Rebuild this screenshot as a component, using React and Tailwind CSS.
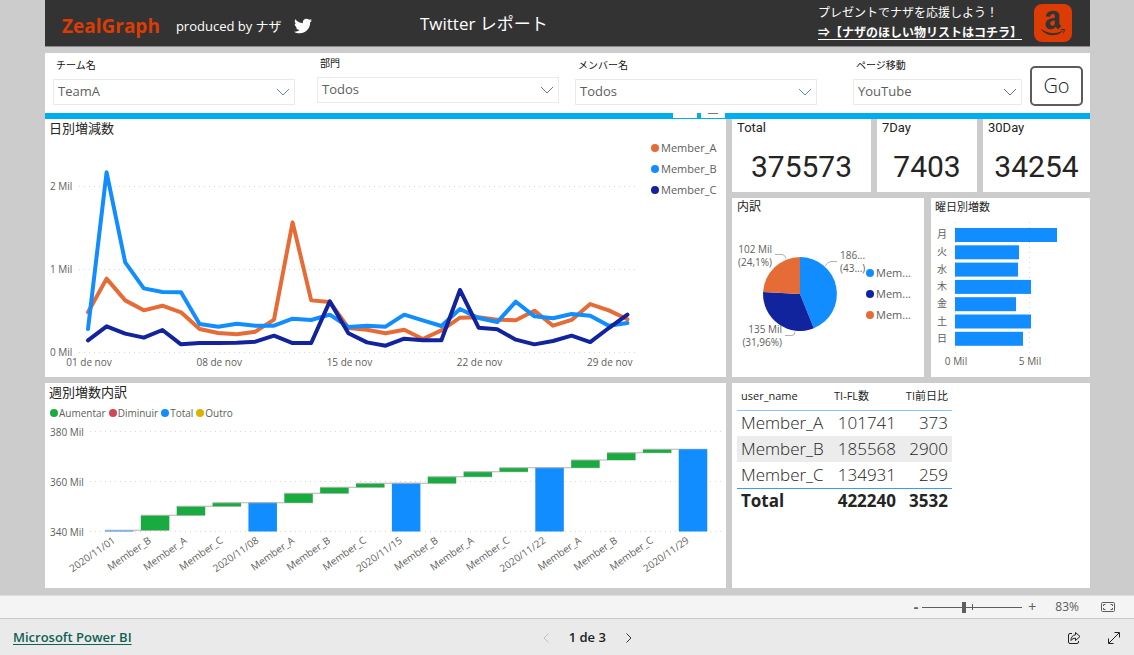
import React from 'react';
import { FaAmazon, FaTwitter } from 'react-icons/fa';

const COLORS = { A: '#e66c37', B: '#118dff', C: '#12239e', up: '#1aab40', grid: '#d6d6d6' };

// Daily growth in thousands, 01 - 30 nov
const DAILY = [
  { key: 'A', values: [478, 884, 622, 502, 558, 478, 277, 229, 213, 245, 390, 1562, 622, 602, 289, 269, 225, 269, 157, 261, 414, 418, 390, 382, 498, 317, 386, 578, 502, 394] },
  { key: 'B', values: [277, 2165, 1080, 767, 723, 719, 337, 305, 341, 317, 317, 402, 386, 450, 301, 317, 305, 450, 382, 313, 518, 410, 361, 606, 430, 406, 458, 438, 317, 349] },
  { key: 'C', values: [141, 309, 221, 173, 265, 92, 108, 108, 112, 124, 197, 108, 108, 610, 225, 116, 76, 161, 141, 141, 747, 293, 273, 149, 92, 133, 197, 120, 289, 450] },
];

// Running total per step; a date label marks a total bar
const WEEKLY = [
  ['2020/11/01', 340.5],
  ['Member_B', 346.5],
  ['Member_A', 350.1],
  ['Member_C', 351.5],
  ['2020/11/08', 351.5],
  ['Member_A', 355.3],
  ['Member_B', 357.7],
  ['Member_C', 359.3],
  ['2020/11/15', 359.3],
  ['Member_B', 361.9],
  ['Member_A', 363.9],
  ['Member_C', 365.5],
  ['2020/11/22', 365.5],
  ['Member_A', 368.6],
  ['Member_B', 371.5],
  ['Member_C', 372.9],
  ['2020/11/29', 372.9],
];

const WEEKDAYS = [
  ['月', 102],
  ['火', 64],
  ['水', 63],
  ['木', 76],
  ['金', 61],
  ['土', 76],
  ['日', 68],
];

const MEMBERS = [
  ['Member_A', 101741, 373],
  ['Member_B', 185568, 2900],
  ['Member_C', 134931, 259],
];

const Header = () => (
  <header className="grid h-[47px] grid-cols-[374fr_397fr_auto] items-center border-b border-[#8a8a8a] bg-[#333333] text-white">
    <div className="flex items-center pt-1.5 pl-[17px]">
      <span className="text-[19px] leading-6 font-bold text-[#dc3b04]">ZealGraph</span>
      <span className="ml-4 text-[13px] leading-5">produced by ナザ</span>
      <a href="#twitter" aria-label="Twitter" className="ml-3">
        <FaTwitter className="size-[18px]" />
      </a>
    </div>
    <h1 className="pt-0.5 text-[17px] leading-6">Twitter レポート</h1>
    <div className="flex items-center pr-[18px]">
      <div className="text-xs leading-5">
        <p>プレゼントでナザを応援しよう！</p>
        <a href="#wishlist" className="block font-bold underline underline-offset-2">
          ⇒【ナザのほしい物リストはコチラ】
        </a>
      </div>
      <a href="#amazon" aria-label="Amazon" className="ml-3 flex size-[38px] items-center justify-center rounded-lg bg-[#dc3b04]">
        <FaAmazon className="size-7 text-[#333333]" />
      </a>
    </div>
  </header>
);

const Chevron = ({ className }) => (
  <svg viewBox="0 0 14 8" className={className} fill="none" stroke="currentColor" aria-hidden="true">
    <path d="M1 1l6 6 6-6" />
  </svg>
);

const Filter = ({ id, label, value, className, chevron = 'text-[#5b8fa8]' }) => (
  <div className={className}>
    <label htmlFor={id} className="block pl-[3px] text-[10px] leading-4 text-[#111111]">
      {label}
    </label>
    <div className="relative mt-1.5">
      <select id={id} className="block h-[26px] w-full appearance-none border border-[#eaeaea] bg-white px-1 text-[13px] text-[#605e5c]">
        <option>{value}</option>
      </select>
      <Chevron className={`pointer-events-none absolute top-[9px] right-[5px] h-2 w-3.5 ${chevron}`} />
    </div>
  </div>
);

const Filters = () => (
  <div className="mt-1.5 flex h-[60px] items-start bg-white pt-1 pr-[7px] pl-2">
    <Filter id="team" label="チーム名" value="TeamA" className="mr-[22px] flex-[242]" />
    <Filter id="section" label="部門" value="Todos" className="-mt-0.5 mr-4 flex-[242]" chevron="text-[#7a7462]" />
    <Filter id="member" label="メンバー名" value="Todos" className="mr-9 flex-[242]" />
    <Filter id="page" label="ページ移動" value="YouTube" className="mr-2 flex-[169]" chevron="text-[#7a7462]" />
    <button type="button" className="mt-[9px] h-10 w-[53px] rounded-[5px] border-2 border-[#5c5c5c] text-xl font-light text-[#222222]">
      Go
    </button>
  </div>
);

// Accent strip with the two clipped visual-header buttons
const AccentBar = () => (
  <div className="grid h-1.5 grid-cols-[687fr_358fr] bg-[#00aeef]">
    <div className="flex justify-end gap-1 pr-[7px]">
      <div className="h-[5px] w-6 bg-white" />
      <div className="flex h-[5px] w-6 justify-center bg-white">
        <div className="h-px w-2.5 bg-[#777777]" />
      </div>
    </div>
  </div>
);

const Dot = ({ className }) => <span className={`inline-block size-2 rounded-full ${className}`} />;

const DailyChart = () => {
  const x = (i) => 43 + i * 18.6;
  const y = (v) => 215 - v * 0.083;
  return (
    <section className="bg-white">
      <h2 className="h-[18px] pl-1 text-[13px] leading-[18px]">日別増減数</h2>
      <div className="grid grid-cols-[606fr_75fr]">
        <svg viewBox="0 0 606 240" className="w-full" role="img" aria-label="日別増減数">
          <g stroke={COLORS.grid} strokeDasharray="1 4">
            {[0, 1000, 2000].map((v) => (
              <line key={v} x1="34" x2="594" y1={y(v) + 0.5} y2={y(v) + 0.5} />
            ))}
          </g>
          <g className="fill-[#605e5c] text-[10px]">
            {[0, 1, 2].map((v) => (
              <text key={v} x="5" y={y(v * 1000) + 4}>{v} Mil</text>
            ))}
            {['01', '08', '15', '22', '29'].map((d, i) => (
              <text key={d} x={x(i * 7) + 1} y="229" textAnchor="middle">{d} de nov</text>
            ))}
          </g>
          {DAILY.map(({ key, values }) => (
            <polyline
              key={key}
              points={values.map((v, i) => `${x(i)},${y(v)}`).join(' ')}
              fill="none"
              stroke={COLORS[key]}
              strokeWidth="4"
              strokeLinecap="round"
              strokeLinejoin="round"
            />
          ))}
        </svg>
        <ul className="text-[11px] leading-[21px] text-[#605e5c]">
          <li className="flex items-center gap-0.5"><Dot className="bg-[#e66c37]" />Member_A</li>
          <li className="flex items-center gap-0.5"><Dot className="bg-[#118dff]" />Member_B</li>
          <li className="flex items-center gap-0.5"><Dot className="bg-[#12239e]" />Member_C</li>
        </ul>
      </div>
    </section>
  );
};

const Kpi = ({ title, value }) => (
  <section className="h-[73px] bg-white font-['Roboto','Liberation_Sans',sans-serif] text-[#252423]">
    <h2 className="pl-[5px] text-[13px] leading-[18px]">{title}</h2>
    <p className="text-center text-[30px] leading-[60px]">{value}</p>
  </section>
);

const PieChart = () => (
  <section className="bg-white">
    <h2 className="h-[18px] pl-[5px] text-xs leading-[18px]">内訳</h2>
    <div className="grid grid-cols-[134fr_58fr]">
      <svg viewBox="0 0 134 161" className="w-full" role="img" aria-label="内訳">
        <path d="M68 78V41A37 37 0 0 1 81.8 112.3Z" fill={COLORS.B} />
        <path d="M68 78L81.8 112.3A37 37 0 0 1 31.1 76Z" fill={COLORS.C} />
        <path d="M68 78L31.1 76A37 37 0 0 1 68 41Z" fill={COLORS.A} />
        <g fill="none" stroke="#b3b3b3">
          <path d="M93 50q3 -4.500 6 -4.500h6" />
          <path d="M43 38.500h7q3 0 4 4" />
          <path d="M53 119.500h7q3 0 3-4" />
        </g>
        <g className="fill-[#605e5c] text-[10px]">
          <text x="108" y="43">186...</text>
          <text x="108" y="56">(43...)</text>
          <text x="40" y="37" textAnchor="end">102 Mil</text>
          <text x="40" y="50" textAnchor="end">(24,1%)</text>
          <text x="50" y="117" textAnchor="end">135 Mil</text>
          <text x="50" y="130" textAnchor="end">(31,96%)</text>
        </g>
      </svg>
      <ul className="pt-[46px] text-[11px] leading-[21px] text-[#605e5c]">
        <li className="flex items-center gap-0.5"><Dot className="bg-[#118dff]" />Mem...</li>
        <li className="flex items-center gap-0.5"><Dot className="bg-[#12239e]" />Mem...</li>
        <li className="flex items-center gap-0.5"><Dot className="bg-[#e66c37]" />Mem...</li>
      </ul>
    </div>
  </section>
);

const WeekdayChart = () => (
  <section className="bg-white">
    <h2 className="h-[18px] pl-1 text-[11px] leading-[18px]">曜日別増数</h2>
    <svg viewBox="0 0 159 161" className="w-full" role="img" aria-label="曜日別増数">
      <g stroke={COLORS.grid} strokeDasharray="1 4">
        <line x1="24.5" x2="24.5" y1="6" y2="138" />
        <line x1="98.5" x2="98.5" y1="6" y2="138" />
      </g>
      {WEEKDAYS.map(([day, width], i) => (
        <g key={day}>
          <text x="6" y={22 + i * 17.3} className="fill-[#605e5c] text-[10px]">{day}</text>
          <rect x="24" y={12 + i * 17.3} width={width} height="14" fill={COLORS.B} />
        </g>
      ))}
      <g className="fill-[#605e5c] text-[10px]" textAnchor="middle">
        <text x="25" y="149">0 Mil</text>
        <text x="99" y="149">5 Mil</text>
      </g>
    </svg>
  </section>
);

const WeeklyChart = () => {
  const x = (i) => 60 + i * 35.86;
  const y = (v) => 108.5 - (v - 340) * 2.5;
  return (
    <section className="bg-white">
      <h2 className="h-5 pl-1 text-[13px] leading-[18px]">週別増数内訳</h2>
      <ul className="flex h-5 items-center gap-[3px] pl-[5px] text-[10px] text-[#605e5c]">
        <li className="flex items-center gap-px"><Dot className="bg-[#1aab40]" />Aumentar</li>
        <li className="flex items-center gap-px"><Dot className="bg-[#d64554]" />Diminuir</li>
        <li className="flex items-center gap-px"><Dot className="bg-[#118dff]" />Total</li>
        <li className="flex items-center gap-px"><Dot className="bg-[#d9b300]" />Outro</li>
      </ul>
      <svg viewBox="0 0 681 165" className="w-full" role="img" aria-label="週別増数内訳">
        <g stroke={COLORS.grid} strokeDasharray="1 4">
          {[340, 360, 380].map((v) => (
            <line key={v} x1="45" x2="677" y1={y(v)} y2={y(v)} />
          ))}
        </g>
        <g className="fill-[#605e5c] text-[10px]">
          {[340, 360, 380].map((v) => (
            <text key={v} x="5" y={y(v) + 4}>{v} Mil</text>
          ))}
        </g>
        {WEEKLY.map(([label, value], i) => {
          const isTotal = label.startsWith('2020');
          const base = isTotal ? 340 : WEEKLY[i - 1][1];
          return (
            <g key={i}>
              <rect x={x(i)} y={y(value)} width="28.5" height={y(base) - y(value)} fill={isTotal ? COLORS.B : COLORS.up} />
              {i < WEEKLY.length - 1 && (
                <line x1={x(i)} x2={x(i + 1) + 28.5} y1={y(value)} y2={y(value)} stroke="#b3b3b3" />
              )}
              <text
                transform={`translate(${x(i) + 11} 119) rotate(-35)`}
                textAnchor="end"
                className="fill-[#605e5c] text-[10px]"
              >
                {label}
              </text>
            </g>
          );
        })}
      </svg>
    </section>
  );
};

const MembersTable = () => (
  <section className="bg-white pl-[5px]">
    <table className="w-[215px] table-fixed text-right text-[17px] text-[#252423]">
      <thead>
        <tr className="h-[27px] border-b border-[#8cc6ff] text-[11px]">
          <th className="w-[93px] pl-1 text-left font-normal">user_name</th>
          <th className="w-[70px] pl-1 text-left font-normal">TI-FL数</th>
          <th className="pr-1 font-normal whitespace-nowrap">TI前日比</th>
        </tr>
      </thead>
      <tbody className="font-light">
        {MEMBERS.map(([name, total, diff]) => (
          <tr key={name} className="h-[26px] leading-5 even:bg-[#ececec]">
            <td className="pl-1 text-left">{name}</td>
            <td className="pr-1">{total}</td>
            <td className="pr-1">{diff}</td>
          </tr>
        ))}
      </tbody>
      <tfoot>
        <tr className="h-[26px] border-t border-[#3a9cf5] leading-5 font-bold">
          <td className="pl-1 text-left">Total</td>
          <td className="pr-1">422240</td>
          <td className="pr-1">3532</td>
        </tr>
      </tfoot>
    </table>
  </section>
);

const ZoomBar = () => (
  <div className="flex h-6 items-center justify-end border-t border-b border-t-[#dddddd] border-b-[#c8c8c8] bg-[#f4f4f4] pr-[19px] text-[#605e5c]">
    <button type="button" aria-label="Reduzir" className="mr-1 text-sm leading-5 font-bold">-</button>
    <div className="relative flex h-3 w-[100px] items-center">
      <span className="absolute left-1/2 h-1.5 w-px bg-[#605e5c]" />
      <input
        type="range"
        aria-label="Zoom"
        defaultValue="41"
        className="relative h-3 w-full appearance-none bg-transparent [&::-webkit-slider-runnable-track]:h-px [&::-webkit-slider-runnable-track]:bg-[#605e5c] [&::-webkit-slider-thumb]:-mt-[5px] [&::-webkit-slider-thumb]:h-[11px] [&::-webkit-slider-thumb]:w-1 [&::-webkit-slider-thumb]:appearance-none [&::-webkit-slider-thumb]:bg-[#605e5c]"
      />
    </div>
    <button type="button" aria-label="Ampliar" className="ml-1.5 text-sm leading-5">+</button>
    <span className="ml-[19px] text-xs">83%</span>
    <button type="button" aria-label="Ajustar à página" className="ml-[22px]">
      <svg viewBox="0 0 14 10" className="h-2.5 w-3.5" fill="none" stroke="currentColor">
        <rect x="0.5" y="0.5" width="13" height="9" rx="1" />
        <path d="M2.500 4V2.500H4.500M9.500 2.500h2V4M11.500 6v1.500h-2M4.500 7.500h-2V6" />
      </svg>
    </button>
  </div>
);

const Footer = () => (
  <footer className="flex h-9 items-center justify-between bg-[#eaeaea] pt-0.5 pr-3.5 pl-[13px] text-[13px] text-[#222222]">
    <a href="#powerbi" className="font-semibold text-[#0f6155] underline underline-offset-2">Microsoft Power BI</a>
    <nav className="flex items-center">
      <button type="button" aria-label="Página anterior" disabled className="px-1 text-[#c0c0c0]">
        <svg viewBox="0 0 6 10" className="h-2.5 w-1.5" fill="none" stroke="currentColor"><path d="M5.500 0.500L1 5l4.500 4.500" /></svg>
      </button>
      <span className="mx-4 font-semibold">1 de 3</span>
      <button type="button" aria-label="Próxima página" className="px-1 text-[#333333]">
        <svg viewBox="0 0 6 10" className="h-2.5 w-1.5" fill="none" stroke="currentColor"><path d="M0.500 0.500L5 5L0.500 9.500" /></svg>
      </button>
    </nav>
    <div className="flex items-center gap-[27px] pl-6">
      <button type="button" aria-label="Compartilhar">
        <svg viewBox="0 0 14 14" className="size-3.5" fill="none" stroke="currentColor" strokeLinejoin="round">
          <path d="M5 2.500H3A1.500 1.500 0 0 0 1.500 4v7A1.500 1.500 0 0 0 3 12.500h7a1.500 1.500 0 0 0 1.500-1.500v-1" />
          <path d="M8.500 1.500l4.500 4-4.500 4V7.200C6.500 7.200 5 8 4 9.500c0-3 1.500-5.500 4.500-5.700z" />
        </svg>
      </button>
      <button type="button" aria-label="Tela inteira">
        <svg viewBox="0 0 12 12" className="size-3" fill="none" stroke="currentColor">
          <path d="M1 11L11 1M6.500 0.500h5v5M0.500 6.500v5h5" />
        </svg>
      </button>
    </div>
  </footer>
);

export default function App() {
  return (
    <div className="bg-[#cccccc] font-['Open_Sans','Noto_Sans_CJK_JP',sans-serif] text-[#252423]">
      <main className="pr-11 pb-[7px] pl-[45px]">
        <Header />
        <Filters />
        <AccentBar />
        <div className="grid grid-cols-[681fr_358fr] gap-1.5">
          <DailyChart />
          <div className="flex flex-col gap-1.5">
            <div className="grid grid-cols-[139fr_100fr_107fr] gap-1.5">
              <Kpi title="Total" value="375573" />
              <Kpi title="7Day" value="7403" />
              <Kpi title="30Day" value="34254" />
            </div>
            <div className="grid flex-1 grid-cols-[192fr_159fr] gap-[7px]">
              <PieChart />
              <WeekdayChart />
            </div>
          </div>
          <WeeklyChart />
          <MembersTable />
        </div>
      </main>
      <ZoomBar />
      <Footer />
    </div>
  );
}
